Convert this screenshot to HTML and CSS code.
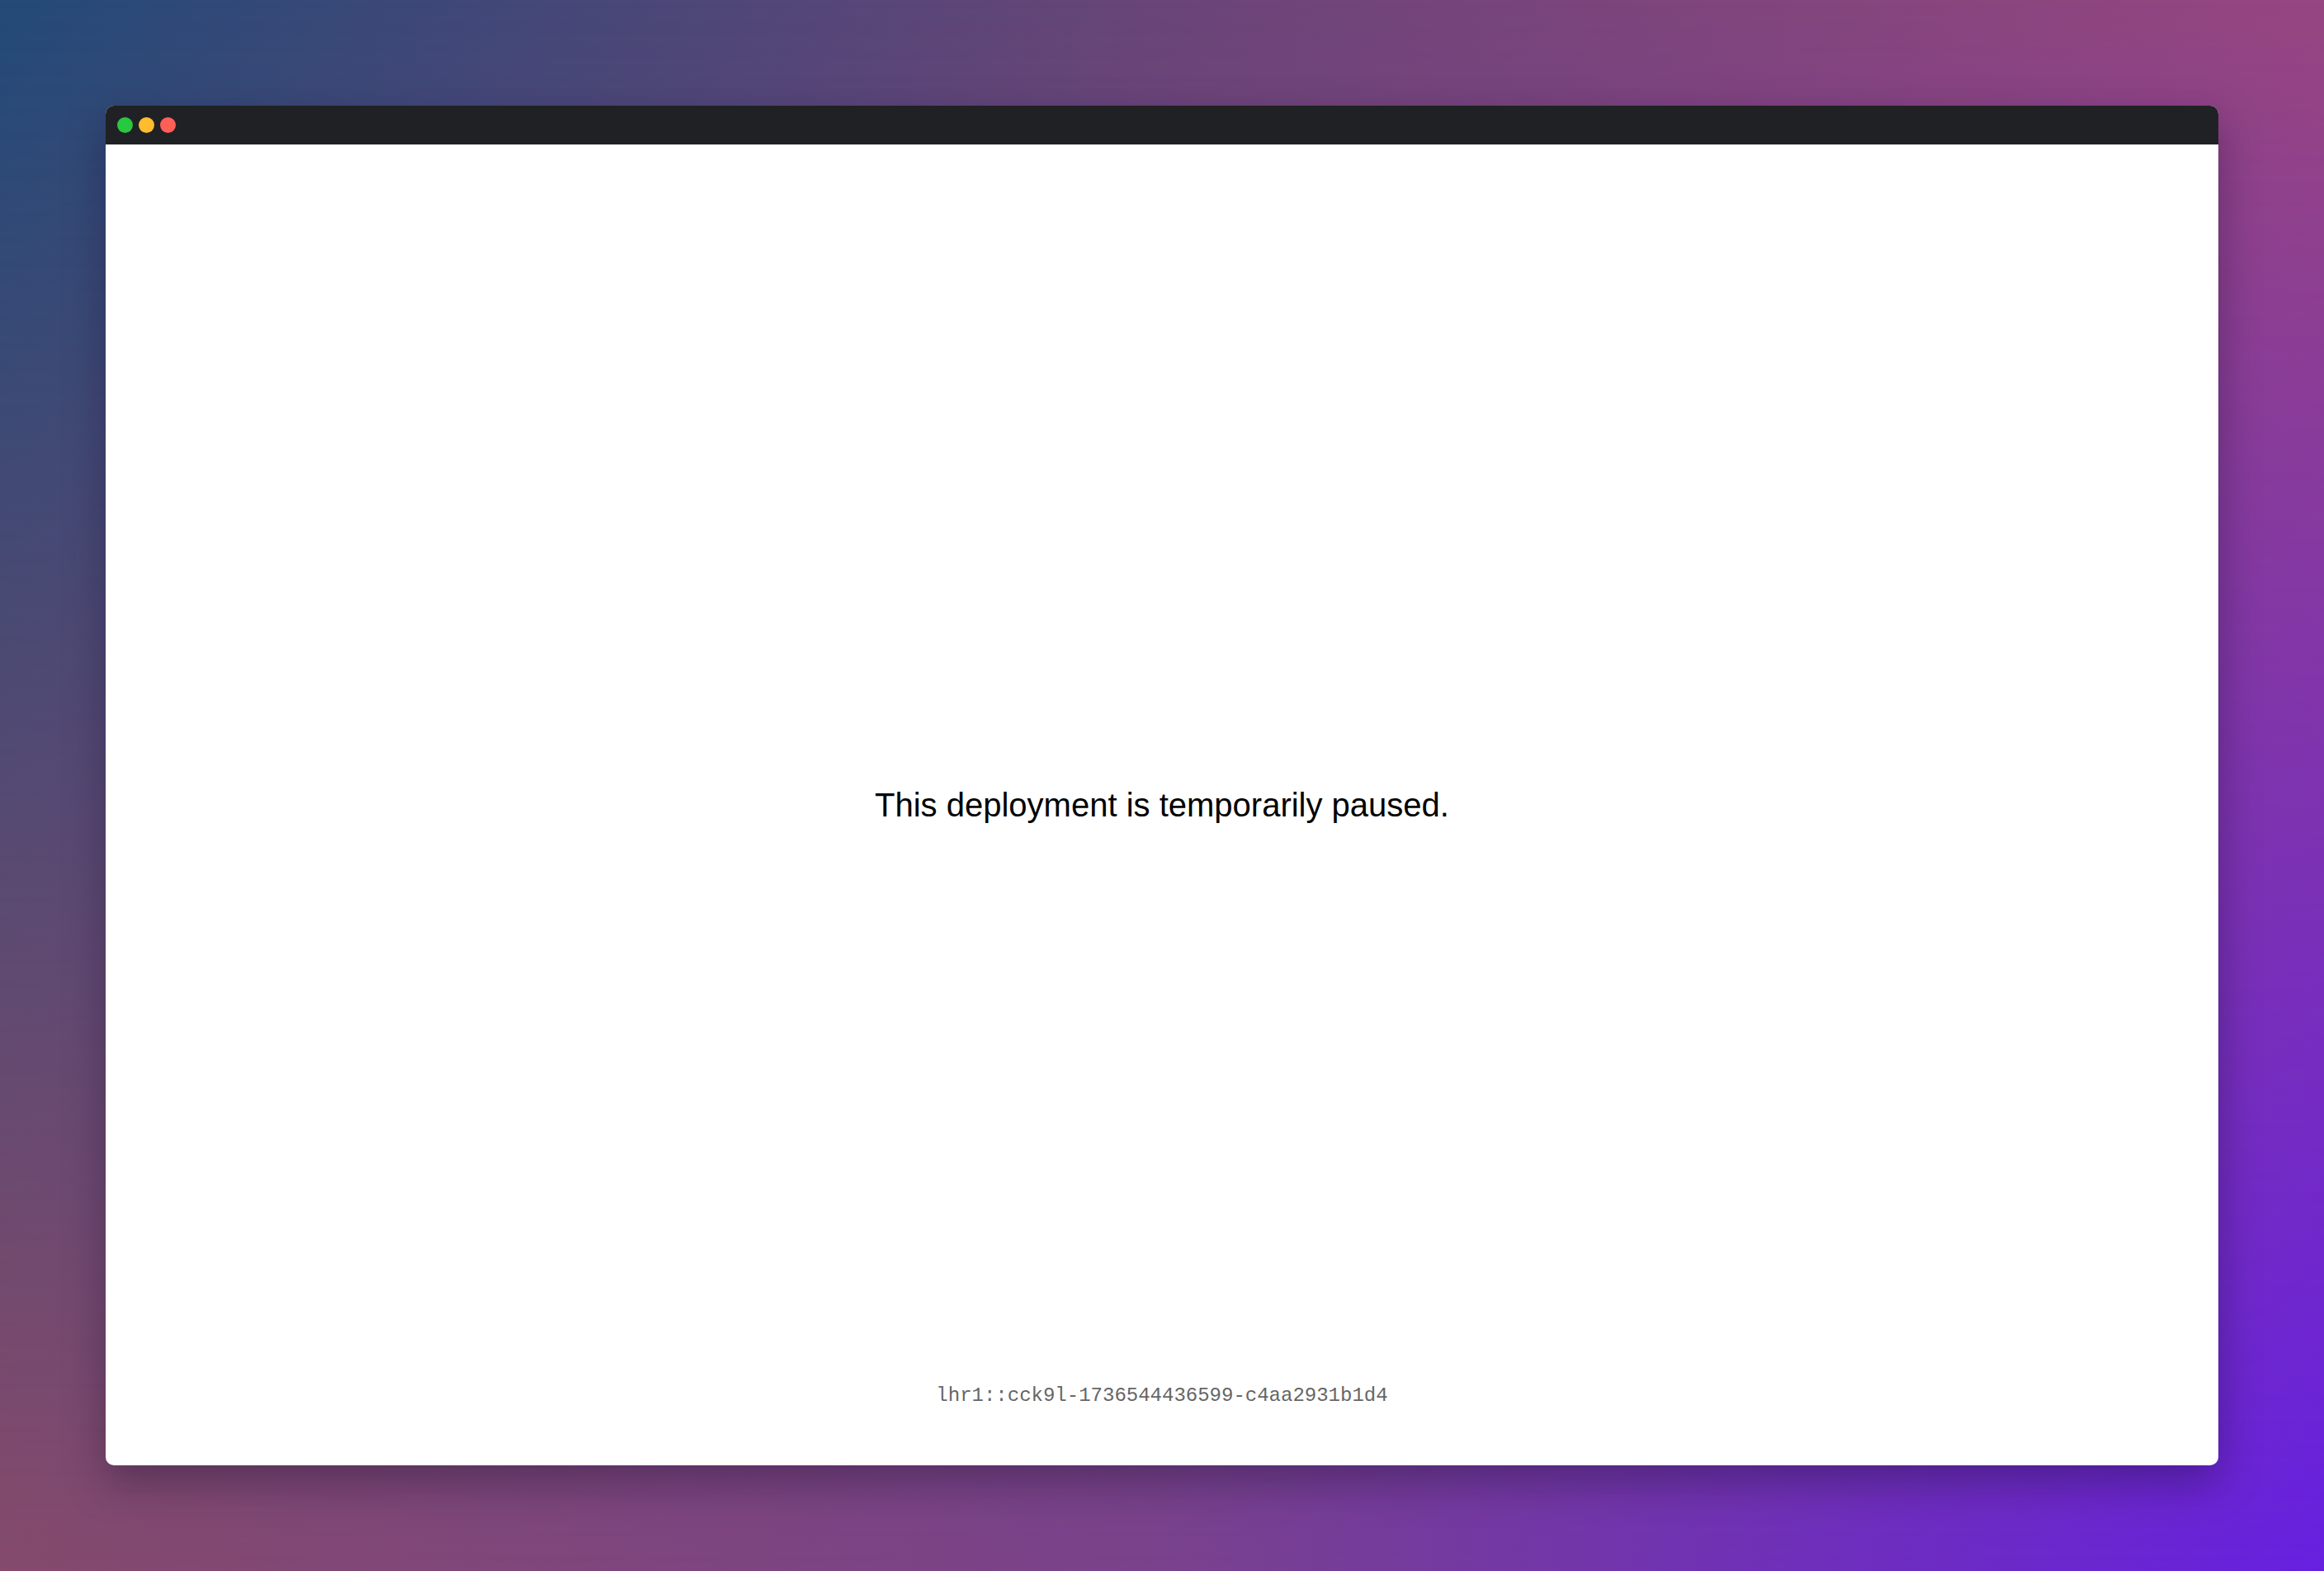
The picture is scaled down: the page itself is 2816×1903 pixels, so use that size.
FILE: index.html
```html
<!DOCTYPE html>
<html lang="en">
<head>
<meta charset="utf-8">
<title>Deployment paused</title>
<link rel="stylesheet" href="styles.css">
</head>
<body>
<div class="backdrop"></div>
<div class="window">
  <div class="titlebar">
    <span class="dot dot-green"></span>
    <span class="dot dot-yellow"></span>
    <span class="dot dot-red"></span>
  </div>
  <div class="content">
    <div class="spacer"></div>
    <p class="message">This deployment is temporarily paused.</p>
    <div class="footer-row">
      <p class="footer">lhr1::cck9l-1736544436599-c4aa2931b1d4</p>
    </div>
  </div>
</div>
</body>
</html>
```
FILE: styles.css
```css
html, body {
  margin: 0;
  padding: 0;
}
body {
  position: relative;
  width: 2816px;
  height: 1903px;
  overflow: hidden;
  background: linear-gradient(to right, #234a78 0%, #6a4578 50%, #974681 100%);
  font-family: "Liberation Sans", Arial, sans-serif;
  padding: 128px 0 0 128px;
  box-sizing: border-box;
}
.backdrop {
  position: absolute;
  inset: 0;
  background: linear-gradient(to right, #854a6c 0%, #79428c 50%, #6620e0 100%);
  -webkit-mask-image: linear-gradient(to bottom, transparent, #000);
  mask-image: linear-gradient(to bottom, transparent, #000);
  z-index: 0;
}
.window {
  position: relative;
  z-index: 1;
  width: 2560px;
  border-radius: 10px;
  overflow: hidden;
  background: #fff;
  box-shadow: 0 20px 50px rgba(20, 10, 40, 0.35);
  display: flex;
  flex-direction: column;
}
.titlebar {
  height: 47px;
  background: #202124;
  display: flex;
  align-items: center;
  gap: 7px;
  padding-left: 14px;
}
.dot {
  width: 19px;
  height: 19px;
  border-radius: 50%;
  display: block;
}
.dot-green { background: #28c840; }
.dot-yellow { background: #febc2e; }
.dot-red { background: #ff5f57; }
.content {
  height: 1600px;
  display: grid;
  grid-template-rows: 1fr auto 1fr;
  justify-items: center;
}
.message {
  margin: 0;
  font-size: 40px;
  line-height: 48px;
  color: #000;
}
.footer-row {
  align-self: end;
  padding-bottom: 66px;
}
.footer {
  margin: 0;
  font-family: "Liberation Mono", "Courier New", monospace;
  font-size: 24px;
  line-height: 36px;
  color: #666;
}
```
